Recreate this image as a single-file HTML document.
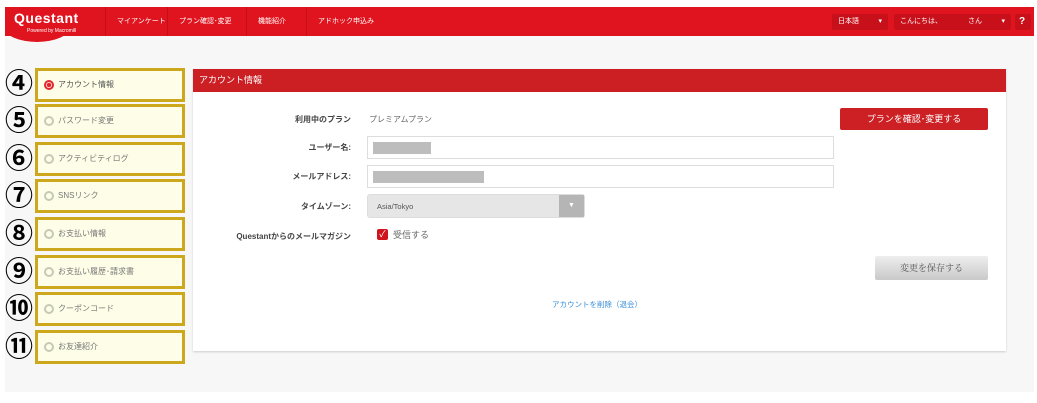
<!DOCTYPE html>
<html><head><meta charset="utf-8"><style>
*{box-sizing:border-box;margin:0;padding:0}
body{width:1037px;height:403px;background:#fff;font-family:"Liberation Sans","Noto Sans CJK JP",sans-serif;position:relative;overflow:hidden}
.bg{position:absolute;left:5px;top:36px;width:1029px;height:356px;background:#f7f7f7}
.hdr{position:absolute;left:5px;top:7px;width:1029px;height:29px;background:#e0141e}
.logo{position:absolute;left:5px;top:7px;width:64px;height:35px;background:#e0141e;border-radius:0 0 32px 32px / 0 0 14px 14px}
.logo b{position:absolute;left:9px;top:3px;color:#fff;font-size:14px;font-weight:bold;letter-spacing:.5px}
.logo i{position:absolute;left:22px;top:21px;color:#fff;font-size:5px;font-style:normal;white-space:nowrap}
.nav{position:absolute;top:7px;height:29px;line-height:29px;color:#fff;font-size:7px;border-left:1px solid #c50f18;padding:0 11px;white-space:nowrap}
.pill{position:absolute;top:14px;height:16px;background:#c8101a;border-radius:2px;color:#fff;font-size:7px;line-height:16px;padding-left:6px}
.side{position:absolute;left:35px;width:150px;height:34px;border:3px solid #cda81c;background:#fefee8;font-size:8px;color:#777;line-height:28px;padding-left:20px}
.side:before{content:"";position:absolute;left:6px;top:9px;width:10px;height:10px;border-radius:50%;border:2px solid #c7c9b8;box-sizing:border-box}
.side.a{color:#555}.side.a:before{border:2px solid #e3262b;background:radial-gradient(#e3262b 2px,#fff 2.5px)}
.num{position:absolute;left:3px;width:32px;height:32px;font-weight:bold;font-size:28px;text-align:center;line-height:32px;color:#000}
.panel{position:absolute;left:193px;top:69px;width:813px;height:282px;background:#fff;box-shadow:0 1px 2px #ccc}
.ph{height:23px;background:#cc1f24;color:#fff;font-size:9px;line-height:23px;padding-left:6px}
.lbl{position:absolute;right:655px;font-size:8px;font-weight:bold;color:#444;white-space:nowrap}
.inp{position:absolute;left:174px;width:467px;height:23px;border:1px solid #ddd;background:#fff}
.inp i{position:absolute;left:5px;top:5px;height:12px;background:#bdbdbd}
</style></head><body>
<div class="bg"></div>
<div class="hdr"></div>
<div class="logo"><b>Questant</b><i>Powered by Macromill</i></div>
<div class="nav" style="left:105px">マイアンケート</div>
<div class="nav" style="left:167px">プラン確認･変更</div>
<div class="nav" style="left:246px">機能紹介</div>
<div class="nav" style="left:306px">アドホック申込み</div>
<div class="pill" style="left:832px;width:56px">日本語 <span style="position:absolute;right:6px">▾</span></div>
<div class="pill" style="left:894px;width:117px">こんにちは、<span style="position:absolute;left:74px">さん</span><span style="position:absolute;right:6px">▾</span></div>
<div class="pill" style="left:1015px;width:16px;padding-left:4px;font-weight:bold;font-size:10px">?</div>

<div class="num" style="top:68px">④</div><div class="side a" style="top:68px">アカウント情報</div>
<div class="num" style="top:105px">⑤</div><div class="side" style="top:104px">パスワード変更</div>
<div class="num" style="top:143px">⑥</div><div class="side" style="top:142px">アクティビティログ</div>
<div class="num" style="top:180px">⑦</div><div class="side" style="top:179px">SNSリンク</div>
<div class="num" style="top:218px">⑧</div><div class="side" style="top:217px">お支払い情報</div>
<div class="num" style="top:256px">⑨</div><div class="side" style="top:255px">お支払い履歴･請求書</div>
<div class="num" style="top:293px">⑩</div><div class="side" style="top:292px">クーポンコード</div>
<div class="num" style="top:331px">⑪</div><div class="side" style="top:330px">お友達紹介</div>

<div class="panel">
<div class="ph">アカウント情報</div>
<div class="lbl" style="top:45px">利用中のプラン</div>
<div style="position:absolute;left:176px;top:45px;font-size:8px;color:#666">プレミアムプラン</div>
<div style="position:absolute;left:647px;top:39px;width:148px;height:22px;background:#cc2024;border-radius:2px;color:#fff;font-size:9px;text-align:center;line-height:22px">プランを確認･変更する</div>
<div class="lbl" style="top:73px">ユーザー名:</div>
<div class="inp" style="top:67px"><i style="width:58px"></i></div>
<div class="lbl" style="top:102px">メールアドレス:</div>
<div class="inp" style="top:96px"><i style="width:111px"></i></div>
<div class="lbl" style="top:132px">タイムゾーン:</div>
<div style="position:absolute;left:174px;top:125px;width:218px;height:24px;background:#e6e6e6;border:1px solid #ddd;border-radius:3px">
<div style="position:absolute;left:9px;top:7px;font-size:7.5px;color:#555;line-height:9px">Asia/Tokyo</div>
<div style="position:absolute;right:0;top:0;width:25px;height:22px;background:#b5b5b5;color:#fff;text-align:center;font-size:7px;line-height:22px">▼</div></div>
<div class="lbl" style="top:162px">Questantからのメールマガジン</div>
<div style="position:absolute;left:184px;top:160px;width:11px;height:11px;background:#d0141e;border-radius:2px;color:#fff;font-size:9px;line-height:11px;text-align:center">✓</div>
<div style="position:absolute;left:200px;top:159px;font-size:9px;color:#666">受信する</div>
<div style="position:absolute;left:682px;top:187px;width:113px;height:24px;background:linear-gradient(#eee,#c9c9c9);border-radius:2px;font-size:9px;color:#555;text-align:center;line-height:24px;font-family:'Liberation Serif','Noto Serif CJK SC',serif">変更を保存する</div>
<div style="position:absolute;left:359px;top:230px;font-size:7.5px;color:#3a8fd8">アカウントを削除（退会）</div>
</div>
</body></html>
